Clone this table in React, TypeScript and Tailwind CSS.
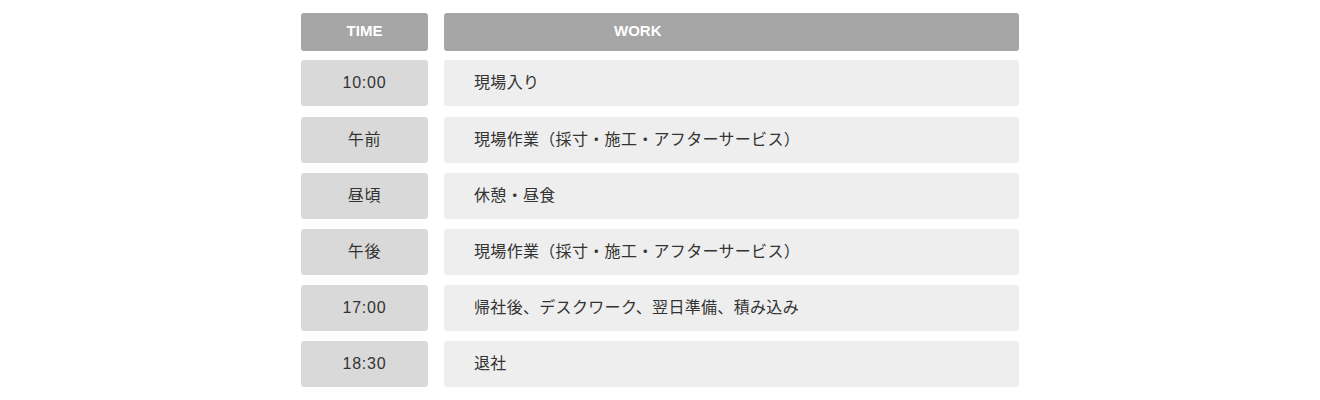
const rows = [
  { time: '10:00', work: '現場入り' },
  { time: '午前', work: '現場作業（採寸・施工・アフターサービス）' },
  { time: '昼頃', work: '休憩・昼食' },
  { time: '午後', work: '現場作業（採寸・施工・アフターサービス）' },
  { time: '17:00', work: '帰社後、デスクワーク、翌日準備、積み込み' },
  { time: '18:30', work: '退社' },
];

export default function App() {
  return (
    <div className="flex h-[400px] w-full justify-center bg-white pt-[13px] font-['Liberation_Sans','Noto_Sans_CJK_JP',sans-serif] text-[#333]">
      <div className="flex w-[718px] flex-col">
        <div className="flex h-[38px] gap-[16px] text-[15px] font-bold text-white">
          <div className="flex w-[127px] items-center justify-center rounded-[3px] bg-[#a6a6a6] pb-[2px]">TIME</div>
          <div className="flex flex-1 items-center rounded-[3px] bg-[#a6a6a6] pb-[2px] pl-[170px]">WORK</div>
        </div>
        <div className="mt-[9px] flex flex-col gap-[10px] text-[16px]">
          {rows.map((r, i) => (
            <div key={i} className={`flex h-[46px] gap-[16px] ${i === 0 ? 'mb-[1px]' : ''}`}>
              <div className="flex w-[127px] items-center justify-center rounded-[3px] bg-[#d9d9d9] tracking-[0.05em]">{r.time}</div>
              <div className="flex flex-1 items-center rounded-[3px] bg-[#eeeeee] pl-[30px] tracking-[0.02em]">{r.work}</div>
            </div>
          ))}
        </div>
      </div>
    </div>
  );
}
